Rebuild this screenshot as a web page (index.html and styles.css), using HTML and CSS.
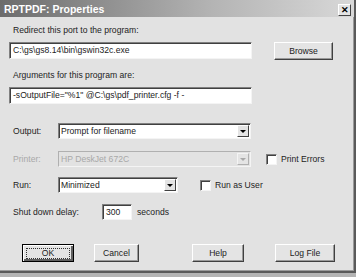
FILE: index.html
```html
<!DOCTYPE html>
<html lang="en">

<head>
    <meta charset="UTF-8">
    <title>RPTPDF: Properties</title>
    <link rel="stylesheet" href="styles.css">
</head>

<body>
    <div class="dialog">
        <div class="titlebar">
            <span class="title">RPTPDF: Properties</span>
            <span class="close">&#x2715;</span>
        </div>

        <div class="content">
            <div class="label first">Redirect this port to the program:</div>
            <div class="row program">
                <div class="field wide">C:\gs\gs8.14\bin\gswin32c.exe</div>
                <div class="btn browse">Browse</div>
            </div>

            <div class="label args">Arguments for this program are:</div>
            <div class="field wide argfield">-sOutputFile="%1" @C:\gs\pdf_printer.cfg -f -</div>

            <div class="row output">
                <span class="caption">Output:</span>
                <div class="select long">
                    <span class="value">Prompt for filename</span>
                    <span class="arrow"></span>
                </div>
            </div>

            <div class="row printer">
                <span class="caption disabled">Printer:</span>
                <div class="select long off">
                    <span class="value">HP DeskJet 672C</span>
                    <span class="arrow"></span>
                </div>
                <span class="check"></span>
                <span class="checklabel">Print Errors</span>
            </div>

            <div class="row run">
                <span class="caption">Run:</span>
                <div class="select short">
                    <span class="value">Minimized</span>
                    <span class="arrow"></span>
                </div>
                <span class="check"></span>
                <span class="checklabel">Run as User</span>
            </div>

            <div class="row delay">
                <span class="caption delaycap">Shut down delay:</span>
                <div class="field small">300</div>
                <span class="unit">seconds</span>
            </div>

            <div class="row buttons">
                <div class="btn ok"><span class="focus">OK</span></div>
                <div class="btn cancel">Cancel</div>
                <div class="btn help">Help</div>
                <div class="btn logfile">Log File</div>
            </div>
        </div>
    </div>
</body>

</html>
```

FILE: styles.css
```css
body {
    margin: 0;
    background: #b4b4b4;
    font-family: "Liberation Sans", Arial, sans-serif;
    font-size: 8.6px;
    color: #222;
}

.dialog {
    width: 356px;
    height: 273px;
    box-sizing: border-box;
    background: #e2e2e2;
    border-right: 2px solid #5a5a5a;
    border-bottom: 2px solid #5a5a5a;
    box-shadow: inset -1px -1px #9a9a9a;
}

.titlebar {
    height: 17px;
    display: flex;
    align-items: center;
    justify-content: space-between;
    padding: 0 3px 0 4px;
    background: linear-gradient(to right, #6c6c6c, #b4b4b4 60%, #d8d8d8);
}

.title {
    color: #fff;
    font-weight: bold;
    font-size: 10.5px;
}

.close {
    width: 11px;
    height: 10px;
    margin-top: 2px;
    background: #e4e4e4;
    border: 1px solid;
    border-color: #fff #444 #444 #fff;
    font-size: 9px;
    font-weight: bold;
    line-height: 10px;
    text-align: center;
    color: #000;
}

.content {
    padding-left: 9px;
}

.label {
    height: 12px;
    line-height: 12px;
    padding-left: 4px;
}

.first {
    margin-top: 7px;
}

.row {
    display: flex;
    align-items: center;
}

.program {
    margin-top: 5px;
    height: 18px;
}

.field {
    box-sizing: border-box;
    height: 17px;
    line-height: 13px;
    padding: 1px 3px;
    background: #fff;
    border: 1px solid;
    border-color: #808080 #f4f4f4 #f4f4f4 #808080;
    box-shadow: inset 1px 1px #404040;
    white-space: nowrap;
    overflow: hidden;
}

.wide {
    width: 243px;
}

.btn {
    box-sizing: border-box;
    height: 18px;
    line-height: 16px;
    text-align: center;
    background: #e4e4e4;
    border: 1px solid;
    border-color: #fff #404040 #404040 #fff;
    box-shadow: inset -1px -1px #9a9a9a;
}

.browse {
    width: 59px;
    margin-left: 22px;
    margin-top: 1px;
}

.args {
    margin-top: 10px;
}

.argfield {
    margin-top: 6px;
}

.output {
    margin-top: 19px;
    height: 16px;
}

.caption {
    width: 45px;
    padding-left: 4px;
}

.disabled {
    color: #a8a8a8;
}

.select {
    box-sizing: border-box;
    height: 16px;
    display: flex;
    align-items: center;
    justify-content: space-between;
    background: #fff;
    border: 1px solid;
    border-color: #808080 #f4f4f4 #f4f4f4 #808080;
    box-shadow: inset 1px 1px #404040;
    padding: 1px 1px 1px 2px;
}

.long {
    width: 193px;
}

.short {
    width: 120px;
}

.arrow {
    width: 12px;
    height: 12px;
    box-sizing: border-box;
    background: #e4e4e4;
    border: 1px solid;
    border-color: #fff #404040 #404040 #fff;
    position: relative;
}

.arrow::after {
    content: "";
    position: absolute;
    left: 2px;
    top: 4px;
    border-left: 3px solid transparent;
    border-right: 3px solid transparent;
    border-top: 3px solid #000;
}

.off {
    background: #e2e2e2;
    border-color: #b0b0b0 #f4f4f4 #f4f4f4 #b0b0b0;
    box-shadow: none;
    color: #a8a8a8;
}

.off .arrow {
    border-color: #f4f4f4 #b0b0b0 #b0b0b0 #f4f4f4;
}

.off .arrow::after {
    border-top-color: #a8a8a8;
}

.printer {
    margin-top: 12px;
    height: 16px;
}

.run {
    margin-top: 10px;
    height: 16px;
}

.check {
    box-sizing: border-box;
    width: 11px;
    height: 11px;
    background: #fff;
    border: 1px solid;
    border-color: #808080 #f4f4f4 #f4f4f4 #808080;
    box-shadow: inset 1px 1px #404040;
}

.printer .check {
    margin-left: 15px;
}

.run .check {
    margin-left: 22px;
}

.checklabel {
    margin-left: 4px;
}

.delay {
    margin-top: 11px;
    height: 16px;
}

.delaycap {
    width: 89px;
}

.small {
    width: 30px;
    height: 16px;
    line-height: 12px;
}

.unit {
    margin-left: 5px;
}

.buttons {
    margin-top: 24px;
}

.ok {
    width: 52px;
    margin-left: 13px;
    border: 1px solid #000;
    box-shadow: inset 1px 1px #fff, inset -2px -2px #606060;
    padding: 3px;
    line-height: 10px;
}

.focus {
    display: block;
    border: 1px dotted #333;
    height: 9px;
    line-height: 9px;
}

.cancel {
    width: 45px;
    margin-left: 20px;
}

.help {
    width: 52px;
    margin-left: 53px;
}

.logfile {
    width: 60px;
    margin-left: 31px;
}
```
